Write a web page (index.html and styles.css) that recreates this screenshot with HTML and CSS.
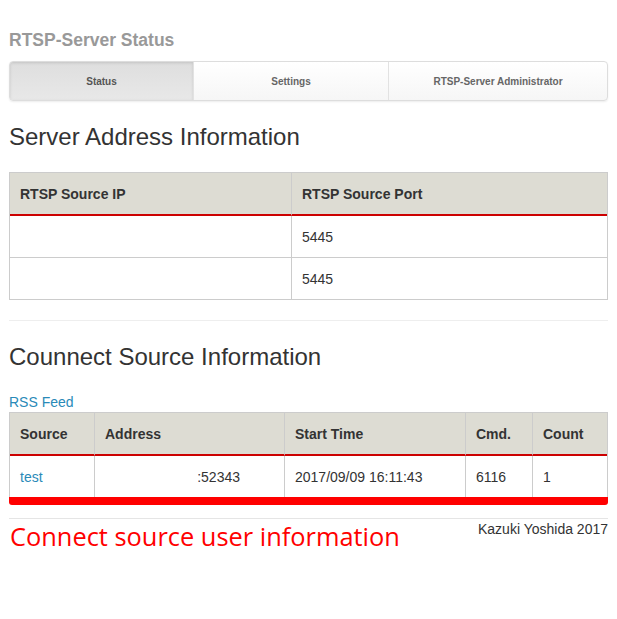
FILE: index.html
```html
<!DOCTYPE html>
<html>
<head>
<meta charset="utf-8">
<link rel="stylesheet" href="styles.css">
</head>
<body>
<div class="page">
  <h1 class="title">RTSP-Server Status</h1>
  <nav class="tabs">
    <a class="tab active">Status</a>
    <a class="tab">Settings</a>
    <a class="tab">RTSP-Server Administrator</a>
  </nav>

  <h2 class="section">Server Address Information</h2>
  <table class="grid addr">
    <thead>
      <tr><th class="c-ip">RTSP Source IP</th><th>RTSP Source Port</th></tr>
    </thead>
    <tbody>
      <tr><td></td><td>5445</td></tr>
      <tr><td></td><td>5445</td></tr>
    </tbody>
  </table>

  <hr class="sep">

  <h2 class="section">Counnect Source Information</h2>
  <a class="rss">RSS Feed</a>
  <div class="tablewrap">
    <table class="grid conn">
      <thead>
        <tr>
          <th class="c-src">Source</th>
          <th class="c-addr">Address</th>
          <th class="c-time">Start Time</th>
          <th class="c-cmd">Cmd.</th>
          <th>Count</th>
        </tr>
      </thead>
      <tbody>
        <tr>
          <td><a class="link">test</a></td>
          <td class="addrcell">:52343</td>
          <td>2017/09/09 16:11:43</td>
          <td>6116</td>
          <td>1</td>
        </tr>
      </tbody>
    </table>
    <div class="mark"></div>
  </div>

  <hr class="sep2">
  <div class="footer">
    <span class="note">Connect source user information</span>
    <span class="credit">Kazuki Yoshida 2017</span>
  </div>
</div>
</body>
</html>
```

FILE: styles.css
```css
html, body {
  margin: 0;
  padding: 0;
  background: #fff;
}
.page {
  width: 599px;
  margin-left: 9px;
  font-family: "Liberation Sans", Arial, sans-serif;
  color: #333;
}
.title {
  margin: 0;
  padding-top: 29px;
  height: 32px;
  font-size: 17.5px;
  font-weight: bold;
  color: #999;
  line-height: 22px;
}
.tabs {
  display: flex;
  height: 38px;
  border: 1px solid #ddd;
  border-radius: 4px;
  background: linear-gradient(#fff, #f6f6f6);
  box-shadow: 0 1px 2px rgba(0,0,0,0.08);
  overflow: hidden;
}
.tab {
  display: flex;
  align-items: center;
  justify-content: center;
  font-family: "Liberation Sans", Tahoma, sans-serif;
  font-size: 10px;
  font-weight: bold;
  color: #666;
  border-left: 1px solid #e2e2e2;
}
.tab:nth-child(1) { width: 183px; border-left: 0; }
.tab:nth-child(2) { width: 194px; }
.tab:nth-child(3) { flex: 1; }
.tab.active {
  background: linear-gradient(#dedede, #e8e8e8);
  box-shadow: inset 0 1px 3px rgba(0,0,0,0.12);
  color: #555;
}
.section {
  margin: 0;
  padding-top: 21px;
  font-size: 24px;
  font-weight: normal;
  color: #333;
  line-height: 30px;
  box-sizing: border-box;
  height: 71px;
}
.grid {
  width: 100%;
  border-collapse: separate;
  border-spacing: 0;
  font-size: 14px;
  border: 1px solid #ccc;
}
.grid th {
  background: #dddcd3;
  text-align: left;
  font-weight: bold;
  color: #333;
  height: 43px;
  padding: 0 10px;
  border-bottom: 2px solid #c00;
  box-sizing: border-box;
}
.grid td {
  height: 42px;
  padding: 0 10px;
  border-bottom: 1px solid #ccc;
  box-sizing: border-box;
  color: #333;
}
.grid tbody tr:last-child td {
  border-bottom: 0;
  height: 41px;
}
.grid th + th,
.grid td + td { border-left: 1px solid #ccc; }
.addr .c-ip { width: 281px; }
.sep {
  margin: 20px 0 0;
  border: 0;
  border-top: 1px solid #eee;
}
.rss {
  display: block;
  font-size: 14px;
  color: #2a8ab8;
  line-height: 20px;
}
.link { color: #2a8ab8; }
.conn .c-src { width: 84px; }
.conn .c-addr { width: 190px; }
.conn .c-time { width: 181px; }
.conn .c-cmd { width: 67px; }
.addrcell { text-align: right; padding-right: 44px !important; }
.tablewrap { position: relative; }
.mark {
  height: 8px;
  background: #ff0000;
  border-radius: 0 0 3px 3px;
  margin-top: -1px;
}
.sep2 {
  margin: 13px 0 0;
  border: 0;
  border-top: 1px solid #e5e5e5;
}
.footer {
  display: flex;
  justify-content: space-between;
  align-items: flex-start;
}
.note {
  font-family: "Open Sans", "Segoe UI", sans-serif;
  font-size: 25.4px;
  line-height: 34px;
  color: #ff0000;
  margin-left: 1px;
}
.credit {
  font-size: 14px;
  line-height: 16px;
  color: #333;
  margin-top: 2px;
}
```
